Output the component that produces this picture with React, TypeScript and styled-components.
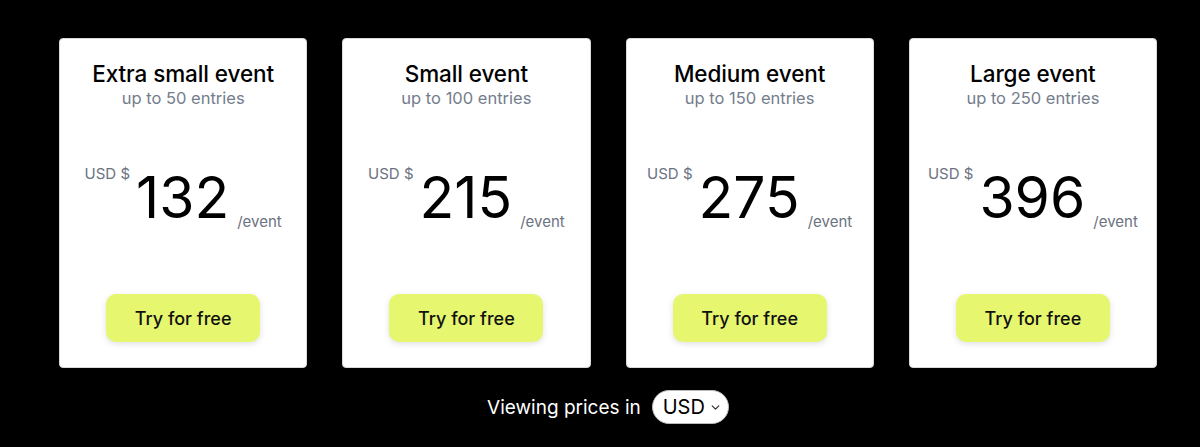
import styled, { createGlobalStyle } from 'styled-components';

const GlobalStyle = createGlobalStyle`
  html, body {
    margin: 0;
    padding: 0;
    background: #000;
  }
  body {
    font-family: Inter, 'Liberation Sans', sans-serif;
    -webkit-font-smoothing: antialiased;
  }
`;

const plans = [
  { name: 'Extra small event', entries: 50, price: 132 },
  { name: 'Small event', entries: 100, price: 215 },
  { name: 'Medium event', entries: 150, price: 275 },
  { name: 'Large event', entries: 250, price: 396 },
];

export default function App() {
  return (
    <Page>
      <GlobalStyle />
      <Grid>
        {plans.map((plan) => (
          <Card key={plan.name}>
            <Title>{plan.name}</Title>
            <Entries>up to {plan.entries} entries</Entries>
            <PriceRow>
              <Currency>USD $</Currency>
              <Amount>{plan.price}</Amount>
              <Per>/event</Per>
            </PriceRow>
            <TryButton>Try for free</TryButton>
          </Card>
        ))}
      </Grid>
      <Footer>
        <span>Viewing prices in</span>
        <Select>
          USD
          <svg width="11" height="11" viewBox="0 0 10 10" fill="none">
            <path d="M2 3.5 L5 6.5 L8 3.5" stroke="#333" strokeWidth="1.1" strokeLinecap="round" strokeLinejoin="round" />
          </svg>
        </Select>
      </Footer>
    </Page>
  );
}

const Page = styled.div`
  width: 1200px;
  height: 447px;
  background: #000;
  padding: 38px 0 0 59px;
  box-sizing: border-box;
`;

const Grid = styled.div`
  width: 1098px;
  display: grid;
  grid-template-columns: repeat(4, 1fr);
  column-gap: 35px;
`;

const Card = styled.div`
  height: 330px;
  box-sizing: border-box;
  background: #fff;
  border: 1px solid #d9d9d9;
  border-radius: 4px;
  display: flex;
  flex-direction: column;
  align-items: center;
  padding: 20px 0 0;
`;

const Title = styled.div`
  font-size: 22.5px;
  line-height: 29px;
  font-weight: 500;
  color: #000;
  letter-spacing: -0.1px;
`;

const Entries = styled.div`
  font-size: 16.5px;
  line-height: 22px;
  color: #747d8c;
  margin-top: -1px;
`;

const PriceRow = styled.div`
  display: flex;
  align-items: flex-start;
  margin-top: 53px;
  height: 80px;
`;

const Currency = styled.div`
  font-size: 15px;
  line-height: 18px;
  color: #6b7280;
  margin-top: 3px;
`;

const Amount = styled.div`
  font-size: 57px;
  line-height: 66px;
  font-weight: 400;
  color: #000;
  margin: 3px 8px 0 6px;
`;

const Per = styled.div`
  font-size: 15px;
  line-height: 18px;
  color: #6b7280;
  margin-top: 51px;
`;

const TryButton = styled.button`
  margin-top: 52px;
  width: 154px;
  height: 48px;
  border: none;
  border-radius: 10px;
  background: #e6f76f;
  box-shadow: 0 2px 6px rgba(0, 0, 0, 0.12);
  font-family: Inter, 'Liberation Sans', sans-serif;
  font-size: 18px;
  font-weight: 500;
  color: #111;
  cursor: pointer;
`;

const Footer = styled.div`
  width: 1098px;
  display: flex;
  justify-content: center;
  align-items: center;
  gap: 11px;
  margin-top: 22px;
  color: #fff;
  font-size: 19px;
`;

const Select = styled.div`
  display: flex;
  align-items: center;
  gap: 5px;
  height: 34px;
  box-sizing: border-box;
  padding: 0 7px 0 10px;
  background: #fff;
  border: 1px solid #bbb;
  border-radius: 17px;
  color: #000;
  font-size: 20px;
`;
